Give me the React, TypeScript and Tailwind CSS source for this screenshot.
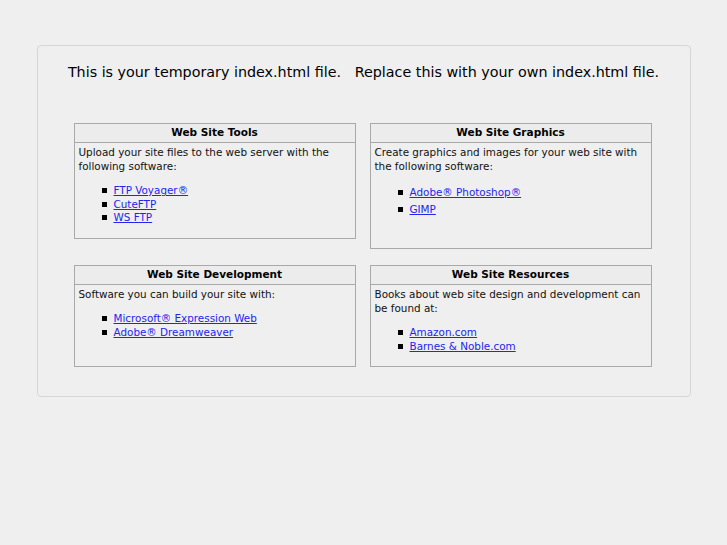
const font = { fontFamily: '"DejaVu Sans", Verdana, sans-serif' };

type Panel = {
  title: string;
  text: string;
  links: string[];
  height: string;
  itemGap: string;
};

const topRow: Panel[] = [
  {
    title: 'Web Site Tools',
    text: 'Upload your site files to the web server with the following software:',
    links: ['FTP Voyager®', 'CuteFTP', 'WS FTP'],
    height: 'h-[116px]',
    itemGap: 'leading-[13.5px]',
  },
  {
    title: 'Web Site Graphics',
    text: 'Create graphics and images for your web site with the following software:',
    links: ['Adobe® Photoshop®', 'GIMP'],
    height: 'h-[126px]',
    itemGap: 'leading-[17px] mt-[3px]',
  },
];

const bottomRow: Panel[] = [
  {
    title: 'Web Site Development',
    text: 'Software you can build your site with:',
    links: ['Microsoft® Expression Web', 'Adobe® Dreamweaver'],
    height: 'h-[102px]',
    itemGap: 'leading-[13.5px]',
  },
  {
    title: 'Web Site Resources',
    text: 'Books about web site design and development can be found at:',
    links: ['Amazon.com', 'Barnes & Noble.com'],
    height: 'h-[102px]',
    itemGap: 'leading-[13.5px]',
  },
];

function PanelBox({ panel }: { panel: Panel }) {
  return (
    <div className={`w-[282px] border border-[#a9a9a9] bg-[#efefef] ${panel.height}`}>
      <div className="flex h-[19px] items-center justify-center border-b border-[#a9a9a9] bg-[#ececec] text-[10.5px] font-bold text-black">
        {panel.title}
      </div>
      <div className="px-[4px] pt-[2px] text-[10.4px] leading-[14px] text-[#111]">
        <p>{panel.text}</p>
        <ul className={`mt-[11px] pl-[23px] ${panel.itemGap}`}>
          {panel.links.map((link) => (
            <li key={link} className="flex items-center gap-[7px]">
              <span className="inline-block h-[5px] w-[5px] bg-black" />
              <a href="#" className="text-[#2424f0] underline">
                {link}
              </a>
            </li>
          ))}
        </ul>
      </div>
    </div>
  );
}

export default function App() {
  return (
    <div className="min-h-[545px] w-full bg-[#efefef] pt-[45px]" style={font}>
      <div className="mx-auto w-[654px] rounded-[4px] border border-[#d6d6d6] bg-[#efefef] pb-[29px] pl-[36px] pr-[36px]">
        <h1 className="-mx-[36px] whitespace-nowrap pt-[17px] pb-[42px] text-center text-[14.3px] leading-[18px] text-black">
          This is your temporary index.html file.&nbsp;&nbsp;&nbsp;Replace this with your own index.html file.
        </h1>
        <div className="flex items-start gap-[14px]">
          {topRow.map((p) => (
            <PanelBox key={p.title} panel={p} />
          ))}
        </div>
        <div className="mt-[16px] flex items-start gap-[14px]">
          {bottomRow.map((p) => (
            <PanelBox key={p.title} panel={p} />
          ))}
        </div>
      </div>
    </div>
  );
}
